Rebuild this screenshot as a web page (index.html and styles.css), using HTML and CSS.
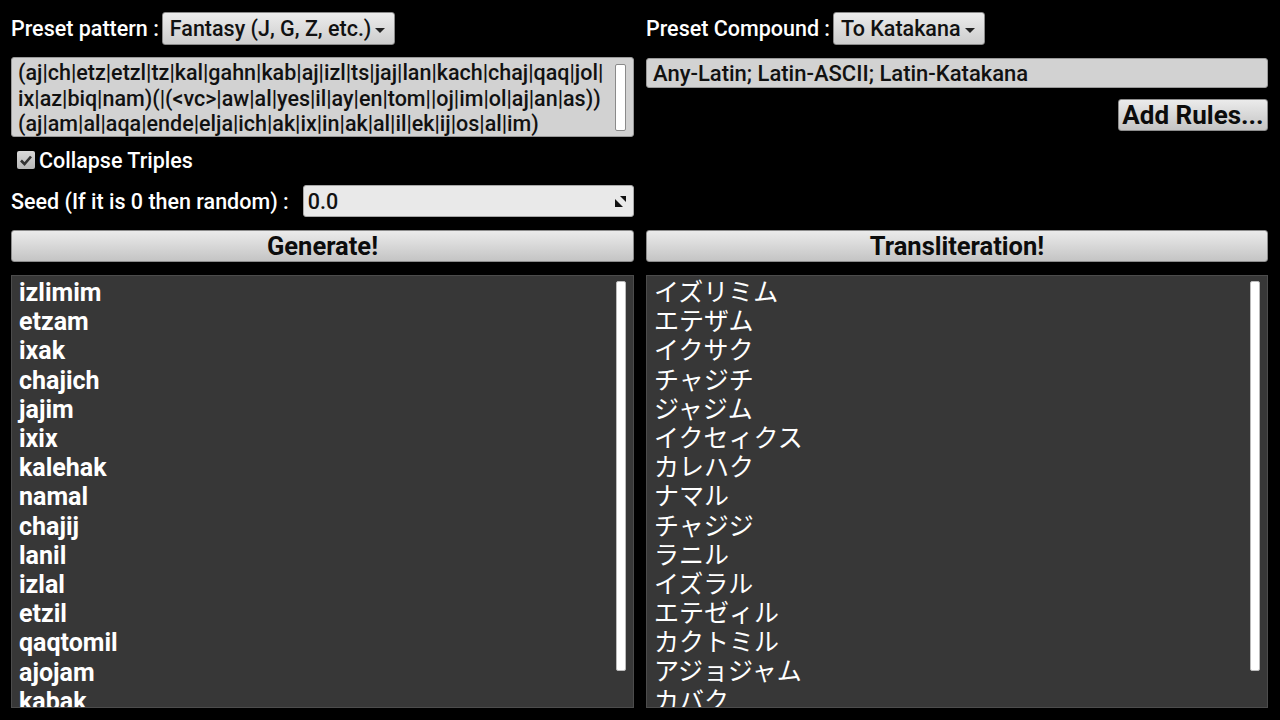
FILE: index.html
```html
<!DOCTYPE html>
<html lang="en">
<head>
<meta charset="utf-8">
<title>Name Generator</title>
<link rel="stylesheet" href="styles.css">
</head>
<body>
<div class="app">
  <div class="top">
    <div class="col">
      <div class="preset-row">
        <span class="label">Preset pattern :</span>
        <div class="spinner">Fantasy (J, G, Z, etc.)<span class="caret"></span></div>
      </div>
      <div class="pattern">
        <div class="pattern-text">(aj|ch|etz|etzl|tz|kal|gahn|kab|aj|izl|ts|jaj|lan|kach|chaj|qaq|jol|<br>ix|az|biq|nam)(|(&lt;vc&gt;|aw|al|yes|il|ay|en|tom||oj|im|ol|aj|an|as))<br>(aj|am|al|aqa|ende|elja|ich|ak|ix|in|ak|al|il|ek|ij|os|al|im)</div>
        <div class="mini-scroll"></div>
      </div>
      <div class="check-row">
        <span class="checkbox"><svg viewBox="0 0 18 18" width="18" height="18"><path d="M4 9.5 L7.5 13 L14 5.5" fill="none" stroke="#333" stroke-width="2.6"/></svg></span>
        <span class="label">Collapse Triples</span>
      </div>
      <div class="seed-row">
        <span class="label">Seed (If it is 0 then random) :</span>
        <div class="seed-input">0.0
          <svg class="resize" viewBox="0 0 12 12" width="12" height="12"><polygon points="5,0 11,0 11,6" fill="#111"/><polygon points="0,3 0,11 8,11" fill="#111"/></svg>
        </div>
      </div>
    </div>
    <div class="col">
      <div class="preset-row">
        <span class="label">Preset Compound :</span>
        <div class="spinner">To Katakana<span class="caret"></span></div>
      </div>
      <div class="compound">Any-Latin; Latin-ASCII; Latin-Katakana</div>
      <div class="rules-row"><button class="btn small">Add Rules...</button></div>
    </div>
  </div>
  <div class="actions">
    <button class="btn wide">Generate!</button>
    <button class="btn wide">Transliteration!</button>
  </div>
  <div class="results">
    <div class="list latin">
      <div class="items">
        <div>izlimim</div><div>etzam</div><div>ixak</div><div>chajich</div><div>jajim</div><div>ixix</div><div>kalehak</div><div>namal</div><div>chajij</div><div>lanil</div><div>izlal</div><div>etzil</div><div>qaqtomil</div><div>ajojam</div><div>kabak</div>
      </div>
      <div class="scroll"></div>
    </div>
    <div class="list kana">
      <div class="items">
        <div>イズリミム</div><div>エテザム</div><div>イクサク</div><div>チャジチ</div><div>ジャジム</div><div>イクセィクス</div><div>カレハク</div><div>ナマル</div><div>チャジジ</div><div>ラニル</div><div>イズラル</div><div>エテゼィル</div><div>カクトミル</div><div>アジョジャム</div><div>カバク</div>
      </div>
      <div class="scroll"></div>
    </div>
  </div>
</div>
</body>
</html>
```

FILE: styles.css
```css
html, body {
  margin: 0;
  padding: 0;
  background: #000;
}
body {
  width: 1280px;
  height: 720px;
  overflow: hidden;
  font-family: Roboto, "Noto Sans CJK JP", sans-serif;
  color: #fff;
}
.app {
  padding: 0 12px 0 11px;
}
.top {
  display: grid;
  grid-template-columns: 623px 622px;
  column-gap: 12px;
  height: 218px;
  padding-top: 12px;
  box-sizing: border-box;
}
.col {
  display: flex;
  flex-direction: column;
}
.label {
  font-size: 21.5px;
  font-weight: 500;
  color: #fff;
  white-space: nowrap;
}
.preset-row {
  display: flex;
  align-items: center;
  gap: 3px;
  height: 33px;
}
.spinner {
  height: 33px;
  box-sizing: border-box;
  display: flex;
  align-items: center;
  padding: 0 9px 0 7px;
  background: linear-gradient(#ececec, #cdcdcd);
  border: 1px solid #8a8a8a;
  border-radius: 3px;
  color: #111;
  font-size: 21.5px;
  font-weight: 500;
  white-space: nowrap;
}
.caret {
  display: inline-block;
  width: 0;
  height: 0;
  margin: 3px 0 0 4px;
  border-left: 5px solid transparent;
  border-right: 5px solid transparent;
  border-top: 5px solid #222;
}
.pattern {
  margin-top: 12px;
  height: 80px;
  box-sizing: border-box;
  background: #d2d2d2;
  border: 1px solid #9a9a9a;
  border-radius: 3px;
  display: flex;
  padding: 2px 7px 0 6px;
}
.pattern-text {
  flex: 1;
  color: #111;
  font-size: 21.5px;
  font-weight: 500;
  line-height: 25.5px;
  white-space: nowrap;
  overflow: hidden;
}
.mini-scroll {
  width: 9px;
  margin: 4px 0 5px 0;
  background: #fff;
  border: 1px solid #8a8a8a;
  border-radius: 2px;
}
.check-row {
  display: flex;
  align-items: center;
  gap: 4px;
  height: 30px;
  margin-top: 8px;
  padding-left: 6px;
}
.checkbox {
  width: 18px;
  height: 18px;
  background: linear-gradient(#d8d8d8, #b8b8b8);
  border-radius: 2px;
  display: flex;
}
.seed-row {
  display: flex;
  align-items: center;
  gap: 14px;
  margin-top: 10px;
}
.seed-input {
  position: relative;
  flex: 1;
  height: 32px;
  box-sizing: border-box;
  background: #e9e9e9;
  border: 1px solid #a8a8a8;
  border-radius: 3px;
  color: #111;
  font-size: 21.5px;
  font-weight: 500;
  display: flex;
  align-items: center;
  padding-left: 4px;
}
.resize {
  position: absolute;
  right: 6px;
  top: 10px;
}
.compound {
  margin-top: 13px;
  height: 30px;
  box-sizing: border-box;
  background: #d2d2d2;
  border: 1px solid #9a9a9a;
  border-radius: 3px;
  color: #111;
  font-size: 22px;
  font-weight: 500;
  display: flex;
  align-items: center;
  padding-left: 6px;
}
.rules-row {
  display: flex;
  justify-content: flex-end;
  margin-top: 11px;
}
.btn {
  font-family: inherit;
  background: linear-gradient(#ebebeb, #c4c4c4);
  border: 1px solid #8c8c8c;
  border-radius: 3px;
  color: #0c0c0c;
  font-weight: 700;
  padding: 0;
  cursor: pointer;
}
.btn.small {
  height: 32px;
  width: 150px;
  font-size: 26px;
}
.actions {
  display: grid;
  grid-template-columns: 623px 622px;
  column-gap: 12px;
  margin-top: 12px;
}
.btn.wide {
  height: 32px;
  font-size: 25.5px;
}
.results {
  display: grid;
  grid-template-columns: 623px 622px;
  column-gap: 12px;
  margin-top: 13px;
}
.list {
  height: 433px;
  box-sizing: border-box;
  background: #373737;
  border: 1px solid #4c4c4c;
  display: flex;
  overflow: hidden;
}
.items {
  flex: 1;
  line-height: 29.2px;
  overflow: hidden;
}
.latin .items {
  padding: 2px 0 0 7px;
  font-size: 25px;
  font-weight: 700;
}
.kana .items {
  padding: 1px 0 0 7px;
  font-family: "Noto Sans CJK JP", sans-serif;
  font-size: 25px;
  font-weight: 400;
}
.kana .items div {
  height: 29.2px;
  line-height: 27px;
}
.scroll {
  width: 8px;
  height: 388px;
  margin: 5px 7px 0 0;
  background: #fff;
  border: 1px solid #bbb;
  border-radius: 2px;
}
```
